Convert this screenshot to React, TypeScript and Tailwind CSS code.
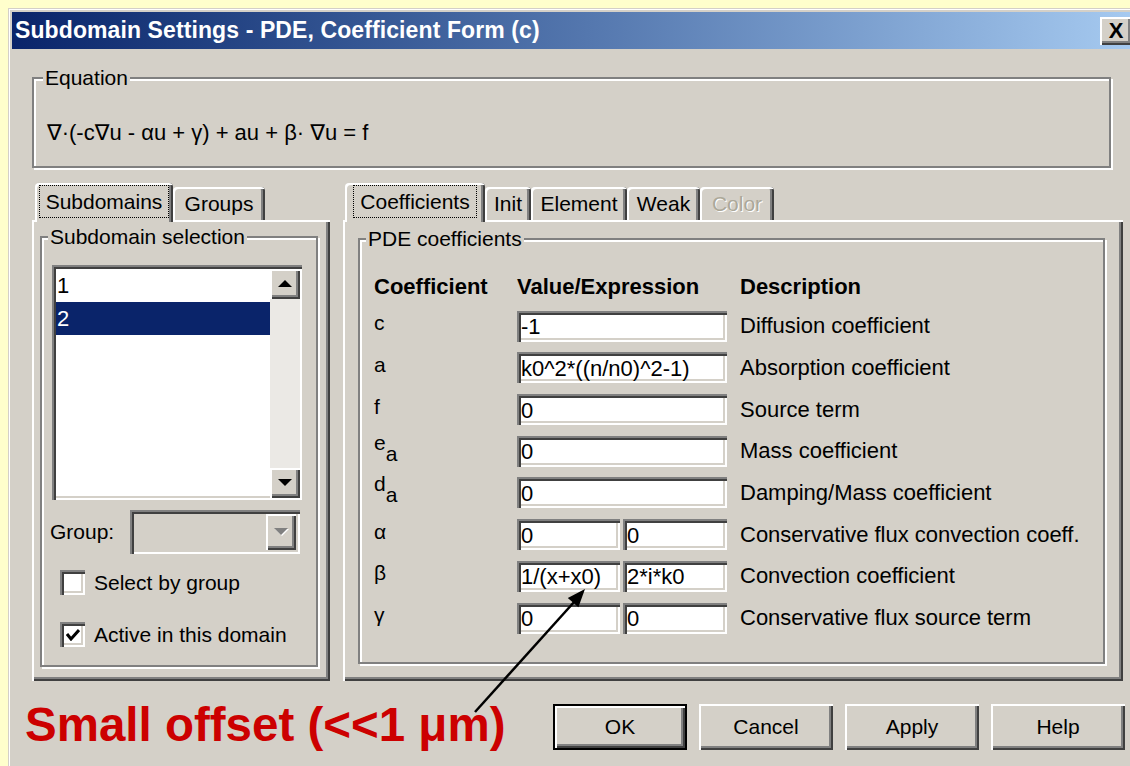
import type { ReactNode } from 'react';

// classic 3D bevels
const raised = 'shadow-[inset_2px_2px_0_#fff,inset_-2px_-2px_0_#404040,inset_-4px_-4px_0_#808080]';
const sunken = 'shadow-[inset_2px_2px_0_#808080,inset_4px_4px_0_#404040,inset_-2px_-2px_0_#fff,inset_-4px_-4px_0_#d4d0c8]';

const GroupBox = ({ title, className, legendClass, children }: { title: string; className: string; legendClass: string; children: ReactNode }) => (
  <fieldset className={`border-2 border-[#808080] shadow-[inset_2px_2px_0_#fff,2px_2px_0_#fff] ${className}`}>
    <legend className={`bg-[#d4d0c8] px-[2px] text-[21px] leading-[24px] ${legendClass}`}>{title}</legend>
    {children}
  </fieldset>
);

const Tab = ({ label, className, active, disabled }: { label: string; className: string; active?: boolean; disabled?: boolean }) => (
  <div
    className={`flex items-center justify-center rounded-t-[4px] bg-[#d4d0c8] text-[21px] shadow-[inset_2px_2px_0_#fff,inset_-2px_0_0_#404040,inset_-4px_0_0_#808080] ${
      active ? 'relative z-10 -mb-[2px] h-[39px] pb-[2px]' : 'h-[33px]'
    } ${disabled ? 'text-[#aca899] [text-shadow:1px_1px_0_#fff]' : 'text-black'} ${className}`}
  >
    {active ? (
      <span className="-mx-[2px] flex h-[31px] items-center px-[6px] outline-1 outline-dotted outline-black">{label}</span>
    ) : (
      label
    )}
  </div>
);

const Arrow = ({ up, grey }: { up?: boolean; grey?: boolean }) => (
  <svg width="15" height="9" viewBox="0 0 15 9">
    {grey && <polygon points={up ? '1,8 15,8 8,1' : '1,1 15,1 8,8'} fill="#fff" />}
    <polygon points={up ? '0,7 14,7 7,0' : '0,0 14,0 7,7'} fill={grey ? '#808080' : '#000'} />
  </svg>
);

const Check = ({ checked, label }: { checked?: boolean; label: string }) => (
  <div className="flex h-[25px] items-center gap-[9px]">
    <div className={`flex h-[25px] w-[25px] items-center justify-center bg-white ${sunken}`}>
      {checked && (
        <svg width="14" height="12" viewBox="0 0 14 12">
          <polyline points="1,5 5,10 13,1" fill="none" stroke="#000" strokeWidth="3" />
        </svg>
      )}
    </div>
    <span className="text-[21px] leading-[25px]">{label}</span>
  </div>
);

const Field = ({ value, className }: { value: string; className: string }) => (
  <div className={`flex h-[31px] items-center bg-white pl-[4px] pt-[2px] text-[22px] leading-[24px] ${sunken} ${className}`}>{value}</div>
);

type Row = { label: ReactNode; values: string[]; desc: string };

const rows: Row[] = [
  { label: 'c', values: ['-1'], desc: 'Diffusion coefficient' },
  { label: 'a', values: ['k0^2*((n/n0)^2-1)'], desc: 'Absorption coefficient' },
  { label: 'f', values: ['0'], desc: 'Source term' },
  { label: <>e<span className="align-[-11px]">a</span></>, values: ['0'], desc: 'Mass coefficient' },
  { label: <>d<span className="align-[-11px]">a</span></>, values: ['0'], desc: 'Damping/Mass coefficient' },
  { label: 'α', values: ['0', '0'], desc: 'Conservative flux convection coeff.' },
  { label: 'β', values: ['1/(x+x0)', '2*i*k0'], desc: 'Convection coefficient' },
  { label: 'γ', values: ['0', '0'], desc: 'Conservative flux source term' },
];

const Button = ({ label, isDefault }: { label: string; isDefault?: boolean }) => (
  <div
    className={`flex h-[46px] w-[134px] items-center justify-center text-[21px] ${
      isDefault ? 'border-2 border-black shadow-[inset_2px_2px_0_#fff,inset_-2px_-2px_0_#404040,inset_-4px_-4px_0_#808080]' : raised
    }`}
  >
    {label}
  </div>
);

export default function App() {
  return (
    <div className="relative h-[766px] w-[1130px] overflow-hidden bg-[#ffffcc] pl-[8px] pt-[8px] font-['Liberation_Sans','DejaVu_Sans',sans-serif] text-black">
      <div className="h-[800px] w-[1130px] border-l border-t border-[#d4d0c8] bg-[#d4d0c8] pl-[3px] pt-[3px] shadow-[inset_1px_1px_0_#fff]">
        {/* title bar */}
        <div className="flex h-[37px] w-[1122px] items-center justify-between bg-linear-to-r from-[#0a246a] to-[#a6caf0] pl-[3px]">
          <span className="text-[23px] font-bold tracking-[0.1px] text-white">Subdomain Settings - PDE, Coefficient Form (c)</span>
          <div className={`mr-[2px] flex h-[28px] w-[32px] items-center justify-center bg-[#d4d0c8] text-[22px] font-bold ${raised}`}>X</div>
        </div>

        <div className="pl-[20px]">
          <GroupBox title="Equation" className="mt-[17px] h-[102px] w-[1079px]" legendClass="ml-[9px]">
            <div className="pl-[13px] pt-[31px] text-[22px] leading-[24px]">∇·(-c∇u - αu + γ) + au + β· ∇u = f</div>
          </GroupBox>

          <div className="mt-[15px] flex gap-[13px]">
            {/* subdomain side */}
            <div className="w-[298px]">
              <div className="flex h-[37px] items-end pl-[3px]">
                <Tab label="Subdomains" className="w-[138px]" active />
                <Tab label="Groups" className="w-[92px]" />
              </div>
              <div className={`h-[461px] pl-[8px] pt-[5px] ${raised}`}>
                <GroupBox title="Subdomain selection" className="h-[442px] w-[278px]" legendClass="ml-[6px]">
                  <div className="pl-[8px] pt-[16px]">
                    <div className={`ml-[2px] flex h-[235px] w-[250px] bg-white pb-[2px] pl-[4px] pr-[2px] pt-[4px] ${sunken}`}>
                      <div className="flex-1 text-[22px]">
                        <div className="h-[33px] pl-[1px] leading-[33px]">1</div>
                        <div className="h-[33px] bg-[#0a246a] pl-[1px] leading-[33px] text-white">2</div>
                      </div>
                      <div className="flex w-[30px] flex-col bg-[#ebe9e5]">
                        <div className={`flex h-[30px] items-center justify-center bg-[#d4d0c8] ${raised}`}>
                          <Arrow up />
                        </div>
                        <div className="flex-1" />
                        <div className={`flex h-[30px] items-center justify-center bg-[#d4d0c8] ${raised}`}>
                          <Arrow />
                        </div>
                      </div>
                    </div>

                    <div className="mt-[10px] flex items-center">
                      <span className="w-[80px] text-[21px]">Group:</span>
                      <div className={`flex h-[44px] w-[170px] justify-end bg-[#d4d0c8] p-[4px] ${sunken}`}>
                        <div className={`flex w-[30px] items-center justify-center ${raised}`}>
                          <Arrow grey />
                        </div>
                      </div>
                    </div>

                    <div className="mt-[16px] flex flex-col gap-[27px] pl-[10px]">
                      <Check label="Select by group" />
                      <Check label="Active in this domain" checked />
                    </div>
                  </div>
                </GroupBox>
              </div>
            </div>

            {/* coefficient side */}
            <div className="w-[780px]">
              <div className="flex h-[37px] items-end pl-[2px]">
                <Tab label="Coefficients" className="w-[140px]" active />
                <Tab label="Init" className="w-[46px]" />
                <Tab label="Element" className="w-[96px]" />
                <Tab label="Weak" className="w-[73px]" />
                <Tab label="Color" className="w-[74px]" disabled />
              </div>
              <div className={`h-[461px] pl-[15px] pt-[7px] ${raised}`}>
                <GroupBox title="PDE coefficients" className="h-[437px] w-[747px]" legendClass="ml-[6px]">
                  <div className="grid grid-cols-[143px_210px_1fr] items-center gap-y-[10.7px] pl-[14px] pt-[23px]">
                    <div className="text-[22px] font-bold leading-[26px]">Coefficient</div>
                    <div className="text-[22px] font-bold leading-[26px]">Value/Expression</div>
                    <div className="pl-[13px] text-[22px] font-bold leading-[26px]">Description</div>
                    {rows.map((r, i) => (
                      <div key={i} className="contents">
                        <div className="-mt-[6px] text-[21px] leading-[24px]">{r.label}</div>
                        {r.values.length === 1 ? (
                          <Field value={r.values[0]} className="w-[210px]" />
                        ) : (
                          <div className="flex gap-[3px]">
                            <Field value={r.values[0]} className="w-[103px]" />
                            <Field value={r.values[1]} className="w-[104px]" />
                          </div>
                        )}
                        <div className="pl-[13px] text-[22px] leading-[24px]">{r.desc}</div>
                      </div>
                    ))}
                  </div>
                </GroupBox>
              </div>
            </div>
          </div>

          <div className="mt-[23px] flex h-[46px] items-start">
            <div className="-ml-[7px] -mt-[3px] w-[528px] text-[47.5px] font-bold leading-none text-[#cc0000]">Small offset (&lt;&lt;1 μm)</div>
            <div className="flex gap-[12px]">
              <Button label="OK" isDefault />
              <Button label="Cancel" />
              <Button label="Apply" />
              <Button label="Help" />
            </div>
          </div>
        </div>
      </div>

      {/* annotation arrow */}
      <svg className="pointer-events-none absolute left-0 top-0" width="1130" height="766">
        <line x1="475" y1="712" x2="575" y2="601" stroke="#000" strokeWidth="2.5" />
        <polygon points="585,589 578.4,607.2 567.8,598" fill="#000" />
      </svg>
    </div>
  );
}
